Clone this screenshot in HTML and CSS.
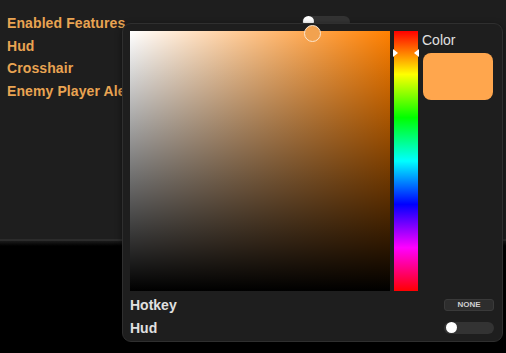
FILE: index.html
```html
<!DOCTYPE html>
<html>
<head>
<meta charset="utf-8">
<link rel="stylesheet" href="styles.css">
</head>
<body>
<div class="app">
  <div class="panel">
    <div class="features">
      <div class="feature-row">
        <span class="feature">Enabled Features</span>
        <span class="bg-toggle"><span class="knob"></span></span>
      </div>
      <div class="feature-row"><span class="feature">Hud</span></div>
      <div class="feature-row"><span class="feature">Crosshair</span></div>
      <div class="feature-row"><span class="feature">Enemy Player Alerts</span></div>
    </div>
  </div>
  <div class="panel-foot"></div>
  <div class="popup">
    <div class="picker-row">
      <div class="sv">
        <span class="marker"></span>
      </div>
      <div class="hue">
        <span class="arrow arrow-left"></span>
        <span class="arrow arrow-right"></span>
      </div>
      <div class="side">
        <div class="color-label">Color</div>
        <div class="swatch"></div>
      </div>
    </div>
    <div class="opt-row">
      <span class="opt-label">Hotkey</span>
      <span class="hotkey-btn">NONE</span>
    </div>
    <div class="opt-row">
      <span class="opt-label">Hud</span>
      <span class="toggle"><span class="knob"></span></span>
    </div>
  </div>
</div>
</body>
</html>
```
FILE: styles.css
```css
* { box-sizing: border-box; }
html, body {
  margin: 0;
  padding: 0;
  background: #000;
  width: 506px;
  height: 353px;
  overflow: hidden;
  font-family: "Liberation Sans", Arial, sans-serif;
}
.app {
  position: relative;
  width: 506px;
  height: 353px;
}
.panel {
  height: 241px;
  background: #1e1e1e;
  border-bottom: 2px solid #2b2b2b;
}
.panel-foot {
  height: 5px;
  background: linear-gradient(to bottom, #1a1a1a, #000);
}
.features {
  padding: 12px 0 0 7px;
}
.feature-row {
  display: flex;
  align-items: center;
  height: 22.5px;
}
.feature {
  width: 295px;
  color: #e9a452;
  font-size: 14px;
  font-weight: bold;
  white-space: nowrap;
  line-height: 16px;
  letter-spacing: 0.1px;
}
.bg-toggle {
  position: relative;
  width: 48px;
  height: 12px;
  border-radius: 6px;
  background: #333;
  margin-top: -3px;
}
.knob {
  position: absolute;
  left: 1px;
  top: 0;
  width: 11px;
  height: 11px;
  border-radius: 50%;
  background: #fff;
}
.popup {
  position: absolute;
  left: 122px;
  top: 23px;
  width: 381px;
  height: 319px;
  background: #1e1e1e;
  border: 1px solid #2f2f2f;
  border-radius: 9px;
  padding: 7px 9px 0 7px;
  box-shadow: 0 2px 6px rgba(0,0,0,0.5);
}
.picker-row {
  display: flex;
  gap: 4px;
}
.sv {
  position: relative;
  width: 260px;
  height: 260px;
  background:
    linear-gradient(to top, #000, rgba(0,0,0,0)),
    linear-gradient(to right, #fff, #ff8000);
}
.marker {
  position: absolute;
  left: 174px;
  top: -6px;
  width: 17px;
  height: 17px;
  border-radius: 50%;
  background: #f2a24f;
  border: 1.5px solid #fbe6cf;
}
.hue {
  position: relative;
  width: 24px;
  height: 260px;
  background: linear-gradient(to bottom, #f00 0%, #ff0 16.67%, #0f0 33.33%, #0ff 50%, #00f 66.67%, #f0f 83.33%, #f00 100%);
}
.arrow {
  position: absolute;
  top: 18px;
  width: 0;
  height: 0;
  border-top: 4px solid transparent;
  border-bottom: 4px solid transparent;
}
.arrow-left {
  left: -1px;
  border-left: 5px solid #fff;
}
.arrow-right {
  right: -1px;
  border-right: 5px solid #fff;
}
.side {
  width: 71px;
  padding-left: 1px;
}
.color-label {
  color: #e0e0e0;
  font-size: 14px;
  line-height: 16px;
  margin-top: 1px;
  margin-left: -1px;
}
.swatch {
  margin-top: 5px;
  width: 70px;
  height: 47px;
  border-radius: 8px;
  background: #ffa64d;
}
.opt-row {
  display: flex;
  justify-content: space-between;
  align-items: center;
  height: 23px;
}
.picker-row + .opt-row {
  margin-top: 2px;
}
.opt-label {
  color: #e0e0e0;
  font-size: 14px;
  font-weight: bold;
  line-height: 16px;
}
.hotkey-btn {
  width: 50px;
  height: 12px;
  border-radius: 3px;
  background: #2d2d2d;
  border: 1px solid #3a3a3a;
  color: #cfcfcf;
  font-size: 8px;
  font-weight: bold;
  line-height: 10px;
  text-align: center;
  margin-right: -1px;
}
.toggle {
  position: relative;
  width: 50px;
  height: 12px;
  border-radius: 6px;
  background: #333;
  margin-right: -1px;
}
.toggle .knob {
  left: 2px;
  top: 0.5px;
}
```
